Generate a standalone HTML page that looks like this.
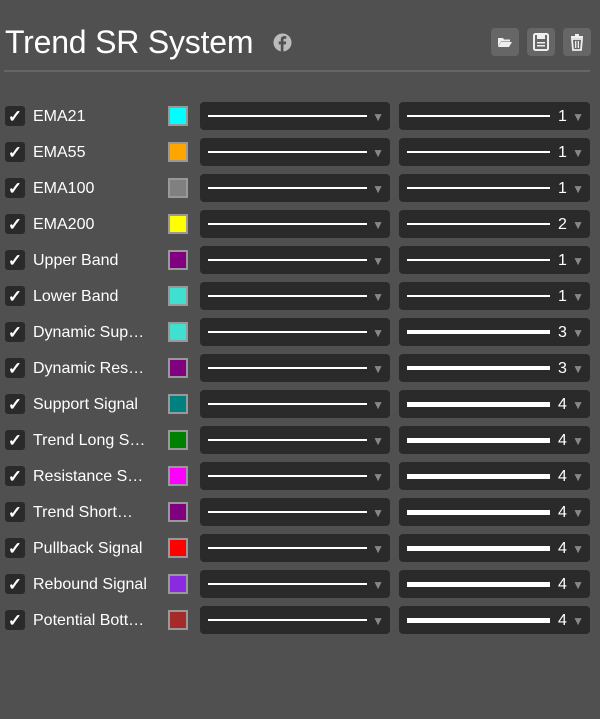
<!DOCTYPE html>
<html><head><meta charset="utf-8"><style>
body{margin:0;width:600px;height:719px;background:#505050;font-family:"Liberation Sans",sans-serif;position:relative;overflow:hidden}
.t{position:absolute;left:5px;top:24px;font-size:32px;color:#fff;letter-spacing:-0.2px}
.hr{position:absolute;left:4px;top:70px;width:586px;height:2px;background:#666}
.btn{position:absolute;top:28px;width:28px;height:28px;background:#666;border-radius:4px}
.row{position:absolute;left:0;height:28px;width:600px}
.cb{position:absolute;left:5px;top:4px;width:20px;height:20px;background:#2a2a2a;border-radius:3px;color:#fff;font-size:17px;text-align:center;line-height:21px;font-weight:bold}
.lb{position:absolute;left:33px;top:6px;color:#fff;font-size:16px}
.sw{position:absolute;left:168px;top:4px;width:16px;height:16px;border:2px solid #999}
.dd{position:absolute;top:0;height:28px;background:#2a2a2a;border-radius:4px}
.d1{left:200px;width:190px}.d2{left:399px;width:191px}
.ln{position:absolute;background:#fff}
.ar{position:absolute;right:6px;top:8px;color:#888;font-size:12px}
.n{position:absolute;left:159px;top:6px;color:#fff;font-size:16px}
</style></head><body>
<div class="t">Trend SR System</div>
<svg style="position:absolute;left:273px;top:33px" width="19" height="19" viewBox="0 0 20 20"><circle cx="10" cy="10" r="9.5" fill="#bbb"/><path d="M11 19.5V12h2.5l.4-3H11V7.3c0-.8.3-1.3 1.4-1.3H14V3.4c-.3 0-1.2-.1-2.2-.1-2.2 0-3.6 1.3-3.6 3.7V9H6v3h2.2v7.5z" fill="#505050"/></svg>
<div class="btn" style="left:491px"><svg width="28" height="28"><path d="M7 10h5l1 1.5h6v2H10l-3 5z" fill="#eee"/><path d="M10 14h11l-3 5H7z" fill="#eee"/></svg></div>
<div class="btn" style="left:527px"><svg width="28" height="28"><rect x="7" y="6" width="14" height="16" rx="1.5" fill="none" stroke="#eee" stroke-width="2"/><rect x="10" y="7" width="8" height="4" fill="#eee"/><rect x="10" y="14" width="8" height="1.5" fill="#eee"/><rect x="10" y="17" width="8" height="1.5" fill="#eee"/></svg></div>
<div class="btn" style="left:563px"><svg width="28" height="28"><rect x="8" y="8" width="12" height="2" fill="#eee"/><rect x="12" y="6" width="4" height="2" fill="#eee"/><path d="M9 11h10l-1 11h-8z" fill="none" stroke="#eee" stroke-width="1.8"/><rect x="12" y="13" width="1.3" height="7" fill="#eee"/><rect x="14.7" y="13" width="1.3" height="7" fill="#eee"/></svg></div>
<div class="hr"></div>
<div id="rows"></div>
<script>
var d=[["EMA21","#00ffff",1],["EMA55","#ffa500",1],["EMA100","#808080",1],["EMA200","#ffff00",2],["Upper Band","#800080",1],["Lower Band","#40e0d0",1],["Dynamic Sup…","#40e0d0",3],["Dynamic Res…","#800080",3],["Support Signal","#008080",4],["Trend Long S…","#008000",4],["Resistance S…","#ff00ff",4],["Trend Short…","#800080",4],["Pullback Signal","#ff0000",4],["Rebound Signal","#8a2be2",4],["Potential Bott…","#a52a2a",4]];
var h="";d.forEach(function(r,i){var w=[0,1.5,2.5,3.5,5][r[2]];
h+='<div class="row" style="top:'+(102+i*36)+'px"><div class="cb">✓</div><div class="lb">'+r[0]+'</div><div class="sw" style="background:'+r[1]+'"></div><div class="dd d1"><div class="ln" style="left:8px;width:159px;height:1.5px;top:13px"></div><div class="ar">▼</div></div><div class="dd d2"><div class="ln" style="left:8px;width:143px;height:'+w+'px;top:'+(14-w/2)+'px"></div><div class="n">'+r[2]+'</div><div class="ar">▼</div></div></div>';});
document.getElementById("rows").innerHTML=h;
</script>
</body></html>
